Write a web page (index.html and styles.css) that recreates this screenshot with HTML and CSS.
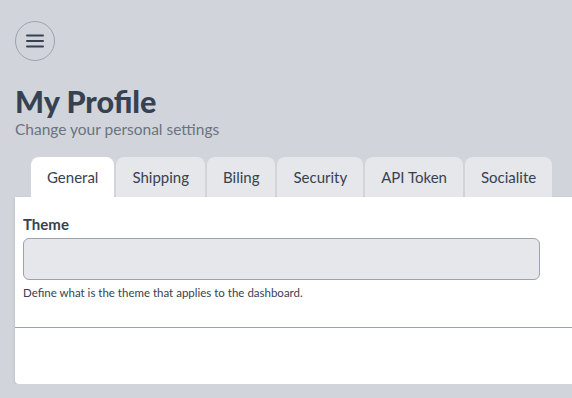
FILE: index.html
```html
<!DOCTYPE html>
<html lang="en">
<head>
    <meta charset="UTF-8">
    <meta name="viewport" content="width=device-width, initial-scale=1.0">
    <title>My Profile</title>
    <link rel="stylesheet" href="styles.css">
</head>
<body>
    <div class="page">
        <button class="menu-btn" aria-label="Menu">
            <svg width="18" height="14" viewBox="0 0 18 14">
                <path d="M1 1.5h16M1 7h16M1 12.5h16" stroke="#374151" stroke-width="2" stroke-linecap="round"/>
            </svg>
        </button>

        <h1>My Profile</h1>
        <p class="subtitle">Change your personal settings</p>

        <div class="tabs">
            <div class="tab active">General</div>
            <div class="tab">Shipping</div>
            <div class="tab">Biling</div>
            <div class="tab">Security</div>
            <div class="tab">API Token</div>
            <div class="tab">Socialite</div>
        </div>

        <div class="card">
            <div class="card-body">
                <label class="field-label">Theme</label>
                <div class="field-input"></div>
                <p class="help">Define what is the theme that applies to the dashboard.</p>
            </div>
            <div class="card-footer"></div>
        </div>
    </div>
</body>
</html>
```

FILE: styles.css
```css
body {
    margin: 0;
    background: #d1d5db;
    font-family: 'Lato', sans-serif;
    color: #374151;
    overflow: hidden;
}

.page {
    padding: 21px 0 0 15px;
    width: 620px;
}

.menu-btn {
    width: 40px;
    height: 40px;
    border-radius: 50%;
    border: 1px solid #9ca3af;
    background: transparent;
    display: flex;
    align-items: center;
    justify-content: center;
    padding: 0;
}

h1 {
    margin: 22px 0 0;
    font-size: 30.5px;
    font-weight: 900;
    line-height: 36px;
    color: #374151;
}

.subtitle {
    margin: 0;
    font-size: 15.5px;
    line-height: 20px;
    color: #6b7280;
}

.tabs {
    display: flex;
    gap: 2px;
    margin: 18px 0 0 16px;
}

.tab {
    height: 40px;
    line-height: 40px;
    padding: 0 16px;
    background: #e5e7eb;
    border-radius: 8px 8px 0 0;
    font-size: 15px;
    color: #374151;
}

.tab.active {
    background: #fff;
}

.card {
    background: #fff;
    border-radius: 0 0 4px 4px;
    box-shadow: 0 1px 3px rgba(0, 0, 0, 0.15);
}

.card-body {
    padding: 17px 8px 0;
    height: 131px;
    border-bottom: 1px solid #9ca3af;
    box-sizing: border-box;
}

.field-label {
    display: block;
    font-size: 15px;
    font-weight: 700;
    line-height: 20px;
}

.field-input {
    margin-top: 4px;
    width: 515px;
    height: 40px;
    background: #e5e7eb;
    border: 1px solid #9ca3af;
    border-radius: 6px;
}

.help {
    margin: 5px 0 0;
    font-size: 11.5px;
    line-height: 16px;
    color: #374151;
}

.card-footer {
    height: 56px;
}
```
